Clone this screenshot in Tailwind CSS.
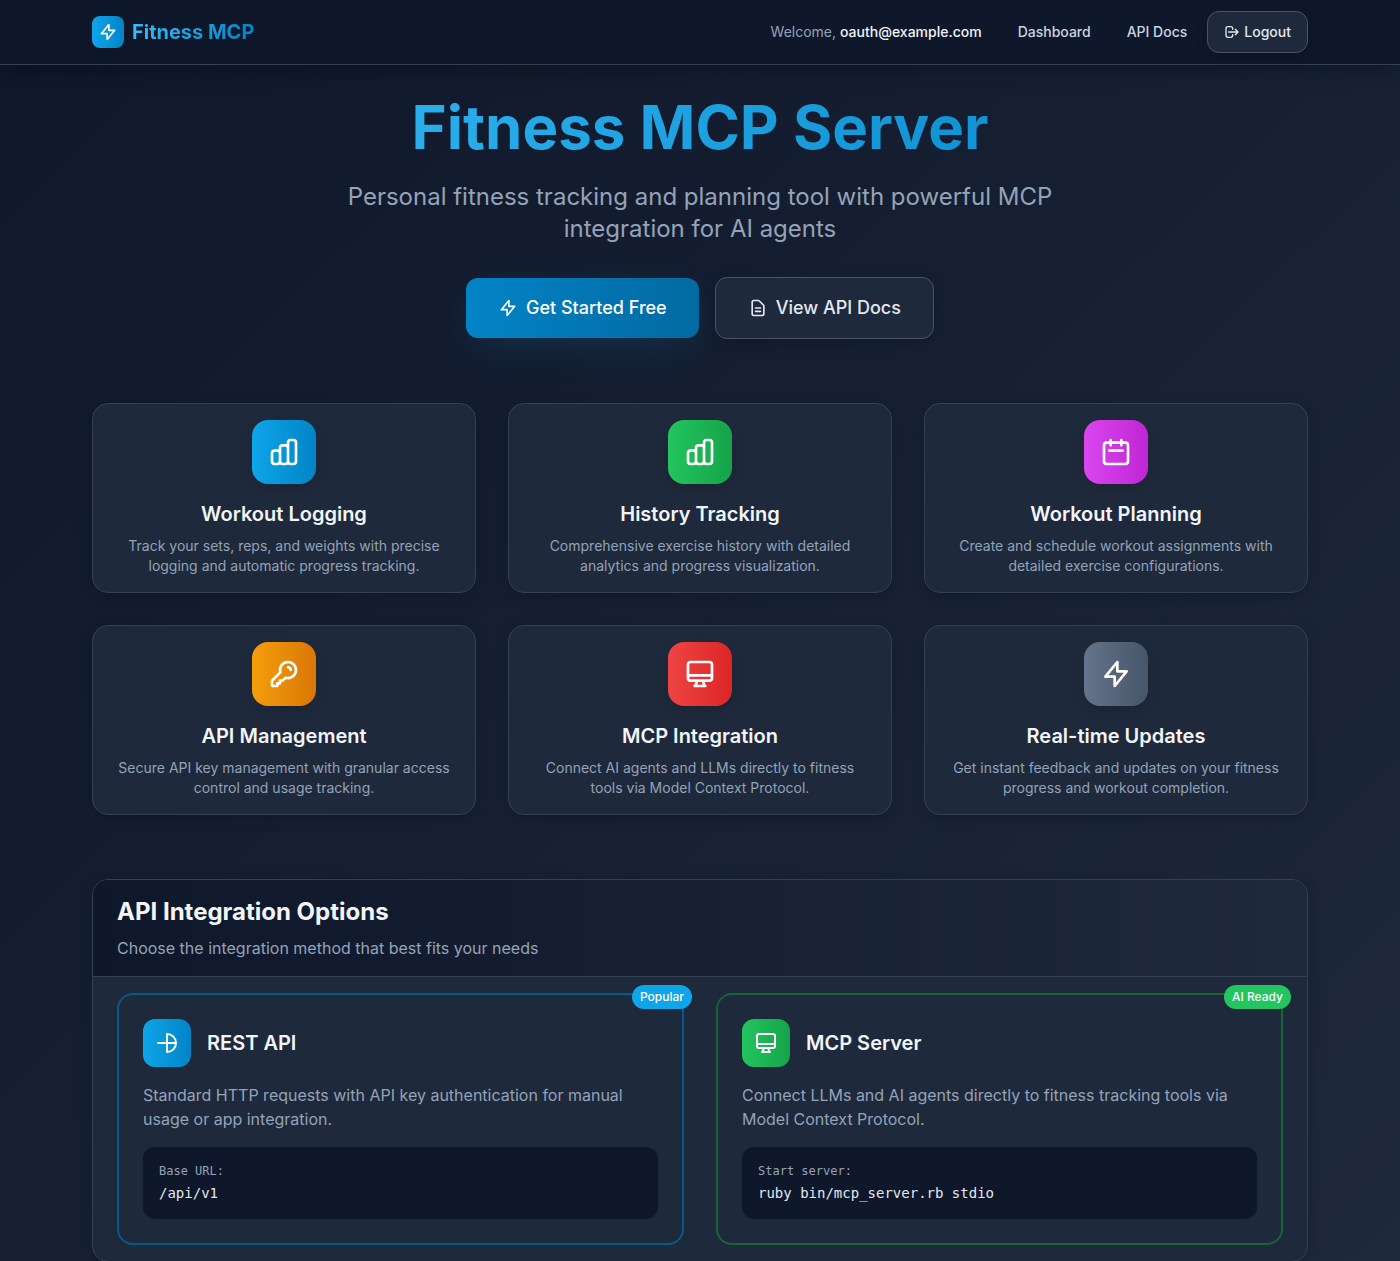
<!DOCTYPE html>
<html lang="en">
<head>
<meta charset="utf-8">
<meta name="viewport" content="width=device-width, initial-scale=1">
<title>Fitness MCP Server</title>
<script src="https://cdn.jsdelivr.net/npm/@tailwindcss/browser@4"></script>
</head>
<body class="min-h-screen bg-[linear-gradient(135deg,#0f172a,#1e293b)] pb-16 font-['Inter',sans-serif] text-[#f1f5f9] antialiased">

<svg class="hidden" aria-hidden="true">
  <defs>
    <symbol id="bolt" viewBox="0 0 24 24"><path d="M13 10V3L4 14h7v7l9-11h-7z"/></symbol>
    <symbol id="chart" viewBox="0 0 24 24"><path d="M9 19v-6a2 2 0 00-2-2H5a2 2 0 00-2 2v6a2 2 0 002 2h2a2 2 0 002-2zm0 0V9a2 2 0 012-2h2a2 2 0 012 2v10m-6 0a2 2 0 002 2h2a2 2 0 002-2m0 0V5a2 2 0 012-2h2a2 2 0 012 2v14a2 2 0 01-2 2h-2a2 2 0 01-2-2z"/></symbol>
    <symbol id="calendar" viewBox="0 0 24 24"><path d="M8 7V3m8 4V3m-9 8h10M5 21h14a2 2 0 002-2V7a2 2 0 00-2-2H5a2 2 0 00-2 2v12a2 2 0 002 2z"/></symbol>
    <symbol id="key" viewBox="0 0 24 24"><path d="M15 7a2 2 0 012 2m4 0a6 6 0 01-7.743 5.743L11 17H9v2H7v2H4a1 1 0 01-1-1v-2.586a1 1 0 01.293-.707l5.964-5.964A6 6 0 1121 9z"/></symbol>
    <symbol id="desktop" viewBox="0 0 24 24"><path d="M9.75 17L9 20l-1 1h8l-1-1-.75-3M3 13h18M5 17h14a2 2 0 002-2V5a2 2 0 00-2-2H5a2 2 0 00-2 2v10a2 2 0 002 2z"/></symbol>
    <symbol id="document" viewBox="0 0 24 24"><path d="M9 12h6m-6 4h6m2 5H7a2 2 0 01-2-2V5a2 2 0 012-2h5.586a1 1 0 01.707.293l5.414 5.414a1 1 0 01.293.707V19a2 2 0 01-2 2z"/></symbol>
    <symbol id="logout" viewBox="0 0 24 24"><path d="M17 16l4-4m0 0l-4-4m4 4H7m6 4v1a3 3 0 01-3 3H6a3 3 0 01-3-3V7a3 3 0 013-3h4a3 3 0 013 3v1"/></symbol>
    <symbol id="globe" viewBox="0 0 24 24"><path d="M21 12a9 9 0 01-9 9m9-9a9 9 0 00-9-9m9 9H3m9 9v-9m0-9v9"/></symbol>
  </defs>
</svg>

<header class="border-b border-[#334155] bg-[#0f172a] shadow-[0_4px_25px_-5px_rgba(0,0,0,0.3),0_10px_10px_-5px_rgba(0,0,0,0.1)]">
  <div class="mx-auto flex h-16 max-w-7xl items-center justify-between px-8">
    <a href="#" class="flex items-center gap-2">
      <span class="flex size-8 items-center justify-center rounded-lg bg-[linear-gradient(90deg,#0ea5e9,#0284c7)] text-white shadow-[0_4px_15px_-3px_rgba(0,0,0,0.3)]">
        <svg class="size-5 fill-none stroke-current stroke-2 [stroke-linecap:round] [stroke-linejoin:round]"><use href="#bolt"/></svg>
      </span>
      <span class="bg-[linear-gradient(90deg,#38bdf8,#0284c7)] bg-clip-text text-xl font-bold text-transparent">Fitness MCP</span>
    </a>
    <nav class="flex items-center gap-1 text-sm">
      <span class="px-4 text-[#94a3b8]">Welcome, <span class="font-medium text-[#f1f5f9]">oauth@example.com</span></span>
      <a href="#" class="px-4 py-2 font-medium text-[#cbd5e1]">Dashboard</a>
      <a href="#" class="px-4 py-2 font-medium text-[#cbd5e1]">API Docs</a>
      <button type="button" class="flex items-center gap-1 rounded-xl border border-[#475569] bg-[#1e293b] px-4 py-2.5 font-medium text-[#e2e8f0] shadow-[0_4px_15px_-3px_rgba(0,0,0,0.3)]">
        <svg class="size-4 fill-none stroke-current stroke-2 [stroke-linecap:round] [stroke-linejoin:round]"><use href="#logout"/></svg>
        Logout
      </button>
    </nav>
  </div>
</header>

<main class="mx-auto max-w-7xl px-8 pt-8">
  <section class="text-center">
    <h1 class="bg-[linear-gradient(90deg,#38bdf8,#0284c7)] bg-clip-text text-6xl leading-none font-bold text-transparent">Fitness MCP Server</h1>
    <p class="mx-auto mt-6 max-w-3xl text-2xl text-[#94a3b8]">Personal fitness tracking and planning tool with powerful MCP integration for AI agents</p>
    <div class="mt-8 flex items-center justify-center gap-4 text-lg font-medium">
      <a href="#" class="flex items-center gap-2 rounded-xl bg-[linear-gradient(90deg,#0284c7,#0369a1)] px-8 py-4 text-white shadow-[0_10px_40px_-10px_rgba(14,165,233,0.2)]">
        <svg class="size-5 fill-none stroke-current stroke-2 [stroke-linecap:round] [stroke-linejoin:round]"><use href="#bolt"/></svg>
        Get Started Free
      </a>
      <a href="#" class="flex items-center gap-2 rounded-xl border border-[#475569] bg-[#1e293b] px-8 py-4 text-[#e2e8f0] shadow-[0_4px_15px_-3px_rgba(0,0,0,0.3)]">
        <svg class="size-5 fill-none stroke-current stroke-2 [stroke-linecap:round] [stroke-linejoin:round]"><use href="#document"/></svg>
        View API Docs
      </a>
    </div>
  </section>

  <section class="mt-16 grid grid-cols-3 gap-8 text-center">
    <article class="rounded-2xl border border-[#334155] bg-[#1e293b] px-6 py-4 shadow-[0_4px_15px_-3px_rgba(0,0,0,0.3)]">
      <div class="mx-auto flex size-16 items-center justify-center rounded-2xl bg-[linear-gradient(90deg,#0ea5e9,#0284c7)] shadow-[0_4px_15px_-3px_rgba(0,0,0,0.2)]">
        <svg class="size-8 fill-none stroke-white stroke-2 [stroke-linecap:round] [stroke-linejoin:round]"><use href="#chart"/></svg>
      </div>
      <h2 class="mt-4 text-xl font-semibold">Workout Logging</h2>
      <p class="mt-2 text-sm text-[#94a3b8]">Track your sets, reps, and weights with precise logging and automatic progress tracking.</p>
    </article>
    <article class="rounded-2xl border border-[#334155] bg-[#1e293b] px-6 py-4 shadow-[0_4px_15px_-3px_rgba(0,0,0,0.3)]">
      <div class="mx-auto flex size-16 items-center justify-center rounded-2xl bg-[linear-gradient(90deg,#22c55e,#16a34a)] shadow-[0_4px_15px_-3px_rgba(0,0,0,0.2)]">
        <svg class="size-8 fill-none stroke-white stroke-2 [stroke-linecap:round] [stroke-linejoin:round]"><use href="#chart"/></svg>
      </div>
      <h2 class="mt-4 text-xl font-semibold">History Tracking</h2>
      <p class="mt-2 text-sm text-[#94a3b8]">Comprehensive exercise history with detailed analytics and progress visualization.</p>
    </article>
    <article class="rounded-2xl border border-[#334155] bg-[#1e293b] px-6 py-4 shadow-[0_4px_15px_-3px_rgba(0,0,0,0.3)]">
      <div class="mx-auto flex size-16 items-center justify-center rounded-2xl bg-[linear-gradient(90deg,#d946ef,#c026d3)] shadow-[0_4px_15px_-3px_rgba(0,0,0,0.2)]">
        <svg class="size-8 fill-none stroke-white stroke-2 [stroke-linecap:round] [stroke-linejoin:round]"><use href="#calendar"/></svg>
      </div>
      <h2 class="mt-4 text-xl font-semibold">Workout Planning</h2>
      <p class="mt-2 text-sm text-[#94a3b8]">Create and schedule workout assignments with detailed exercise configurations.</p>
    </article>
    <article class="rounded-2xl border border-[#334155] bg-[#1e293b] px-6 py-4 shadow-[0_4px_15px_-3px_rgba(0,0,0,0.3)]">
      <div class="mx-auto flex size-16 items-center justify-center rounded-2xl bg-[linear-gradient(90deg,#f59e0b,#d97706)] shadow-[0_4px_15px_-3px_rgba(0,0,0,0.2)]">
        <svg class="size-8 fill-none stroke-white stroke-2 [stroke-linecap:round] [stroke-linejoin:round]"><use href="#key"/></svg>
      </div>
      <h2 class="mt-4 text-xl font-semibold">API Management</h2>
      <p class="mt-2 text-sm text-[#94a3b8]">Secure API key management with granular access control and usage tracking.</p>
    </article>
    <article class="rounded-2xl border border-[#334155] bg-[#1e293b] px-6 py-4 shadow-[0_4px_15px_-3px_rgba(0,0,0,0.3)]">
      <div class="mx-auto flex size-16 items-center justify-center rounded-2xl bg-[linear-gradient(90deg,#ef4444,#dc2626)] shadow-[0_4px_15px_-3px_rgba(0,0,0,0.2)]">
        <svg class="size-8 fill-none stroke-white stroke-2 [stroke-linecap:round] [stroke-linejoin:round]"><use href="#desktop"/></svg>
      </div>
      <h2 class="mt-4 text-xl font-semibold">MCP Integration</h2>
      <p class="mt-2 text-sm text-[#94a3b8]">Connect AI agents and LLMs directly to fitness tools via Model Context Protocol.</p>
    </article>
    <article class="rounded-2xl border border-[#334155] bg-[#1e293b] px-6 py-4 shadow-[0_4px_15px_-3px_rgba(0,0,0,0.3)]">
      <div class="mx-auto flex size-16 items-center justify-center rounded-2xl bg-[linear-gradient(90deg,#64748b,#475569)] shadow-[0_4px_15px_-3px_rgba(0,0,0,0.2)]">
        <svg class="size-8 fill-none stroke-white stroke-2 [stroke-linecap:round] [stroke-linejoin:round]"><use href="#bolt"/></svg>
      </div>
      <h2 class="mt-4 text-xl font-semibold">Real-time Updates</h2>
      <p class="mt-2 text-sm text-[#94a3b8]">Get instant feedback and updates on your fitness progress and workout completion.</p>
    </article>
  </section>

  <section class="mt-16 overflow-hidden rounded-2xl border border-[#334155] bg-[#1e293b] shadow-[0_4px_15px_-3px_rgba(0,0,0,0.3)]">
    <div class="border-b border-[#334155] bg-[linear-gradient(90deg,#0f172a,#1e293b)] px-6 py-4">
      <h2 class="text-2xl font-bold">API Integration Options</h2>
      <p class="mt-2 text-base text-[#94a3b8]">Choose the integration method that best fits your needs</p>
    </div>
    <div class="grid grid-cols-2 gap-8 px-6 py-4">
      <article class="relative rounded-2xl border-2 border-[#075985] p-6">
        <span class="absolute -top-2.5 -right-2.5 rounded-full bg-[#0ea5e9] px-2 py-1 text-xs font-medium text-white">Popular</span>
        <div class="flex items-center gap-4">
          <div class="flex size-12 items-center justify-center rounded-xl bg-[linear-gradient(90deg,#0ea5e9,#0284c7)]">
            <svg class="size-6 fill-none stroke-white stroke-2 [stroke-linecap:round] [stroke-linejoin:round]"><use href="#globe"/></svg>
          </div>
          <h3 class="text-xl font-semibold">REST API</h3>
        </div>
        <p class="mt-4 text-base text-[#94a3b8]">Standard HTTP requests with API key authentication for manual usage or app integration.</p>
        <div class="mt-4 rounded-xl bg-[#0f172a] p-4 font-['DejaVu_Sans_Mono',monospace]">
          <div class="mb-1 text-xs text-[#94a3b8]">Base URL:</div>
          <code class="block font-['DejaVu_Sans_Mono',monospace] text-sm text-[#e2e8f0]">/api/v1</code>
        </div>
      </article>
      <article class="relative rounded-2xl border-2 border-[#166534] p-6">
        <span class="absolute -top-2.5 -right-2.5 rounded-full bg-[#22c55e] px-2 py-1 text-xs font-medium text-white">AI Ready</span>
        <div class="flex items-center gap-4">
          <div class="flex size-12 items-center justify-center rounded-xl bg-[linear-gradient(90deg,#22c55e,#16a34a)]">
            <svg class="size-6 fill-none stroke-white stroke-2 [stroke-linecap:round] [stroke-linejoin:round]"><use href="#desktop"/></svg>
          </div>
          <h3 class="text-xl font-semibold">MCP Server</h3>
        </div>
        <p class="mt-4 text-base text-[#94a3b8]">Connect LLMs and AI agents directly to fitness tracking tools via Model Context Protocol.</p>
        <div class="mt-4 rounded-xl bg-[#0f172a] p-4 font-['DejaVu_Sans_Mono',monospace]">
          <div class="mb-1 text-xs text-[#94a3b8]">Start server:</div>
          <code class="block font-['DejaVu_Sans_Mono',monospace] text-sm text-[#e2e8f0]">ruby bin/mcp_server.rb stdio</code>
        </div>
      </article>
    </div>
  </section>
</main>
</body>
</html>
